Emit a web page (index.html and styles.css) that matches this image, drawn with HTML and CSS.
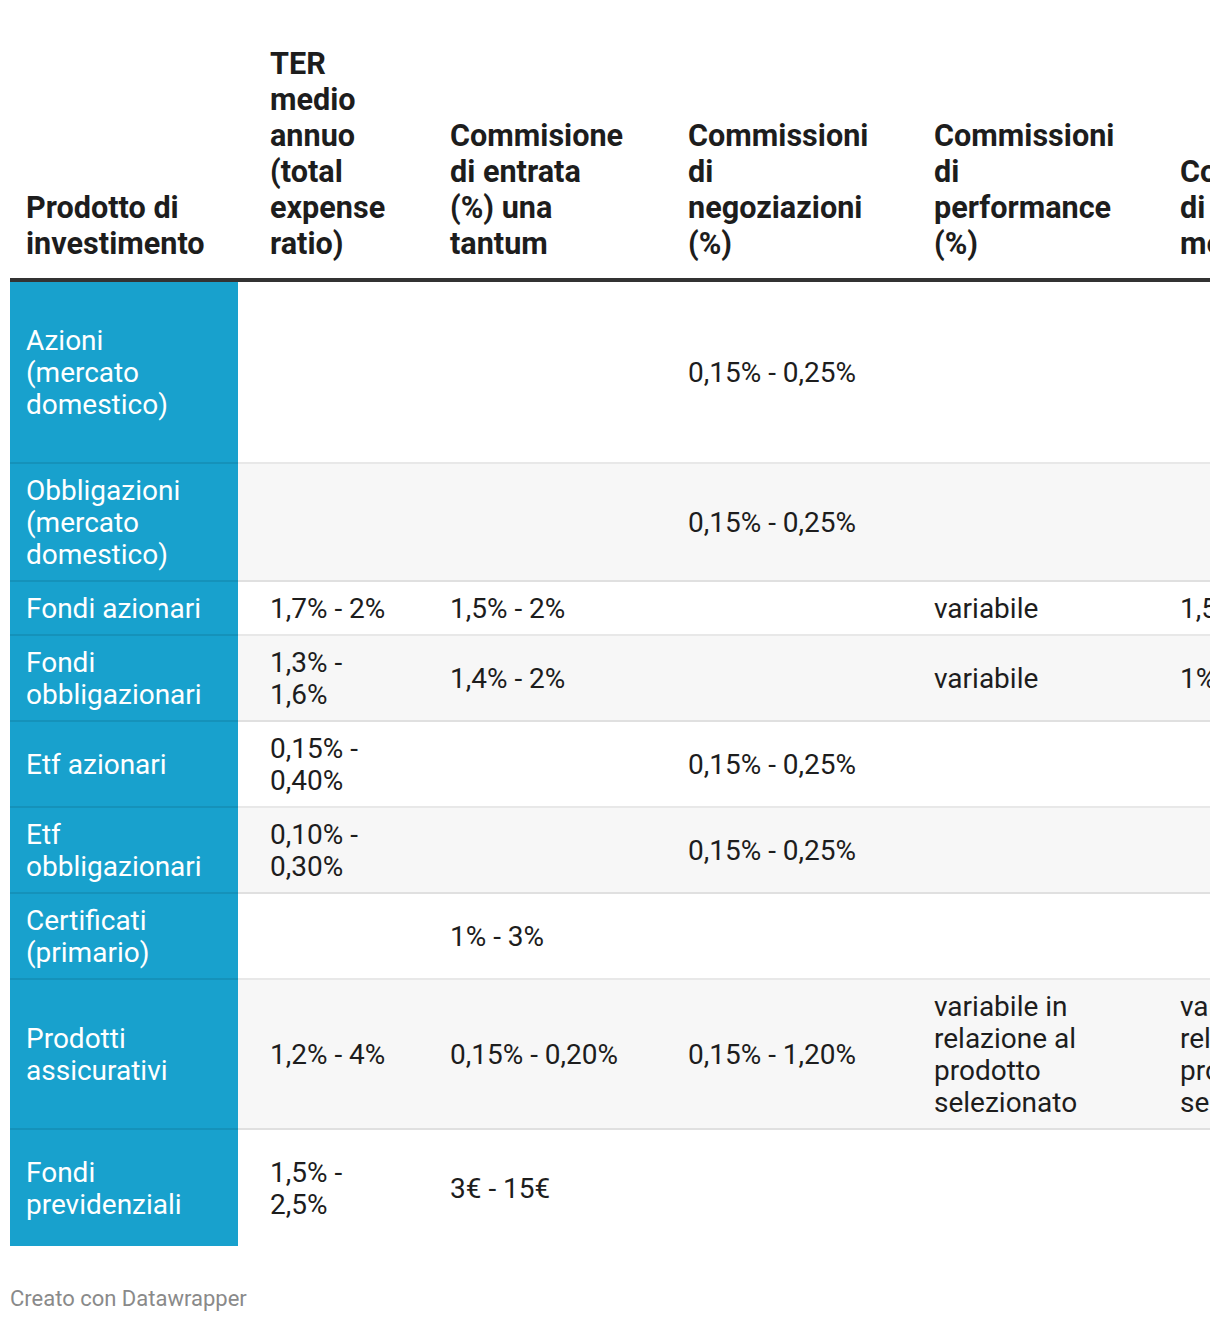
FILE: index.html
```html
<!DOCTYPE html>
<html lang="it">
<head>
<meta charset="utf-8">
<title>Costi prodotti di investimento</title>
<link rel="stylesheet" href="styles.css">
</head>
<body>
<div class="chart">
  <div class="table-wrap">
    <table class="dw-table">
      <colgroup>
        <col class="c-prod">
        <col class="c-ter">
        <col class="c-entr">
        <col class="c-neg">
        <col class="c-perf">
        <col class="c-mant">
      </colgroup>
      <thead>
        <tr>
          <th>Prodotto di<br>investimento</th>
          <th>TER<br>medio<br>annuo<br>(total<br>expense<br>ratio)</th>
          <th>Commisione<br>di entrata<br>(%) una<br>tantum</th>
          <th>Commissioni<br>di<br>negoziazioni<br>(%)</th>
          <th>Commissioni<br>di<br>performance<br>(%)</th>
          <th>Commissioni<br>di<br>mediazione</th>
        </tr>
      </thead>
      <tbody>
        <tr class="h182">
          <td>Azioni<br>(mercato<br>domestico)</td>
          <td></td><td></td>
          <td>0,15% - 0,25%</td>
          <td></td><td></td>
        </tr>
        <tr class="h118">
          <td>Obbligazioni<br>(mercato<br>domestico)</td>
          <td></td><td></td>
          <td>0,15% - 0,25%</td>
          <td></td><td></td>
        </tr>
        <tr class="h54">
          <td>Fondi azionari</td>
          <td>1,7% - 2%</td>
          <td>1,5% - 2%</td>
          <td></td>
          <td>variabile</td>
          <td>1,5% - 2%</td>
        </tr>
        <tr class="h86">
          <td>Fondi<br>obbligazionari</td>
          <td>1,3% -<br>1,6%</td>
          <td>1,4% - 2%</td>
          <td></td>
          <td>variabile</td>
          <td>1% - 1,5%</td>
        </tr>
        <tr class="h86">
          <td>Etf azionari</td>
          <td>0,15% -<br>0,40%</td>
          <td></td>
          <td>0,15% - 0,25%</td>
          <td></td><td></td>
        </tr>
        <tr class="h86">
          <td>Etf<br>obbligazionari</td>
          <td>0,10% -<br>0,30%</td>
          <td></td>
          <td>0,15% - 0,25%</td>
          <td></td><td></td>
        </tr>
        <tr class="h86">
          <td>Certificati<br>(primario)</td>
          <td></td>
          <td>1% - 3%</td>
          <td></td><td></td><td></td>
        </tr>
        <tr class="h150">
          <td>Prodotti<br>assicurativi</td>
          <td>1,2% - 4%</td>
          <td>0,15% - 0,20%</td>
          <td>0,15% - 1,20%</td>
          <td>variabile in<br>relazione al<br>prodotto<br>selezionato</td>
          <td>variabile in<br>relazione al<br>prodotto<br>selezionato</td>
        </tr>
        <tr class="h116 last">
          <td>Fondi<br>previdenziali</td>
          <td>1,5% -<br>2,5%</td>
          <td>3€ - 15€</td>
          <td></td><td></td><td></td>
        </tr>
      </tbody>
    </table>
  </div>
  <p class="credit">Creato con Datawrapper</p>
</div>
</body>
</html>
```

FILE: styles.css
```css
html, body {
  margin: 0;
  padding: 0;
  background: #ffffff;
}

body {
  font-family: Roboto, "Noto Sans", "Liberation Sans", sans-serif;
  color: #1d1d1d;
}

.chart {
  padding: 35px 10px 0 10px;
}

.table-wrap {
  width: 1200px;
  overflow: hidden;
}

.dw-table {
  border-collapse: separate;
  border-spacing: 0;
  table-layout: fixed;
  width: 1384px;
  font-size: 28px;
  line-height: 32px;
}

.c-prod { width: 228px; }
.c-ter { width: 180px; }
.c-entr { width: 238px; }
.c-neg { width: 246px; }
.c-perf { width: 246px; }
.c-mant { width: 246px; }

.dw-table th,
.dw-table td {
  white-space: nowrap;
  text-align: left;
  padding: 11px 0 9px 32px;
  overflow: hidden;
}

.dw-table th {
  font-weight: 700;
  font-size: 30.6px;
  line-height: 36px;
  vertical-align: bottom;
  padding-top: 11px;
  padding-bottom: 16px;
  border-bottom: 4px solid #333333;
}

.dw-table th:first-child,
.dw-table td:first-child {
  padding-left: 16px;
  padding-right: 16px;
}

.dw-table td {
  vertical-align: middle;
  border-bottom: 2px solid rgba(0, 0, 0, 0.09);
}

.dw-table tbody tr:nth-child(even) td {
  background: #f7f7f7;
}

.dw-table tbody td:first-child,
.dw-table tbody tr:nth-child(even) td:first-child {
  background: #18a1cd;
  color: #ffffff;
}

.dw-table tbody tr.last td {
  border-bottom: none;
}

.h182 { height: 182px; }
.h118 { height: 118px; }
.h54 { height: 54px; }
.h86 { height: 86px; }
.h150 { height: 150px; }
.h116 { height: 116px; }

.credit {
  margin: 41px 0 0 0;
  font-size: 22px;
  line-height: 24px;
  color: #8a8a8a;
}
```
